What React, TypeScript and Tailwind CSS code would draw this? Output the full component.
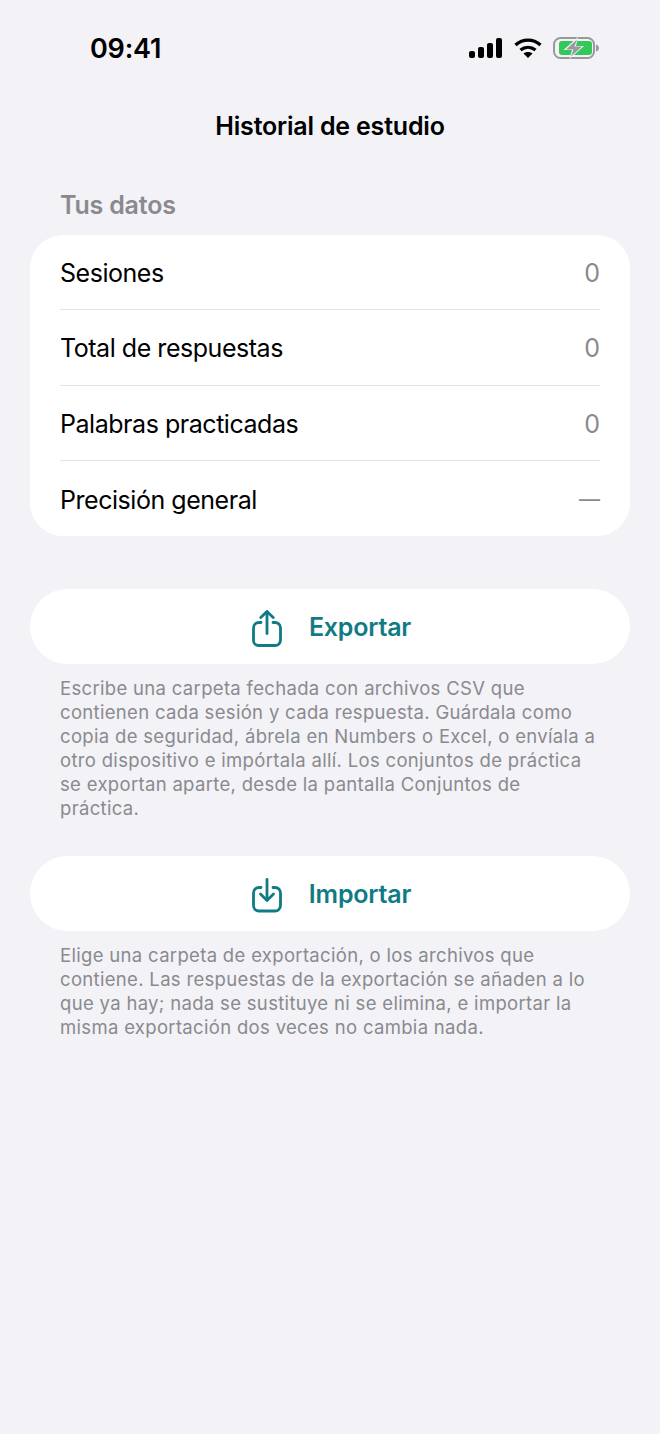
const STATS = [
  { label: "Sesiones", value: "0" },
  { label: "Total de respuestas", value: "0" },
  { label: "Palabras practicadas", value: "0" },
  { label: "Precisión general", value: "—" },
];

function ShareIcon() {
  return (
    <svg className="mt-[3px]" width="30" height="37" viewBox="0 0 30 37" fill="none" stroke="#107b84" strokeWidth="2.800" strokeLinecap="round" strokeLinejoin="round">
      <path d="M9 12.500H7a5.500 5.500 0 0 0-5.500 5.500v12.500a5 5 0 0 0 5 5h16.500a5.500 5.500 0 0 0 5.500-5.500V18a5.500 5.500 0 0 0-5.500-5.500h-2" />
      <path d="M15 23.500V1.800" />
      <path d="M8.800 7.500L15 1.500l6.200 6" />
    </svg>
  );
}

function ImportIcon() {
  return (
    <svg className="mt-[3px]" width="30" height="35" viewBox="0 0 30 35" fill="none" stroke="#107b84" strokeWidth="2.800" strokeLinecap="round" strokeLinejoin="round">
      <path d="M9 9.500H7a5.500 5.500 0 0 0-5.500 5.500v12.500a5.500 5.500 0 0 0 5.500 5.500h16a5.500 5.500 0 0 0 5.500-5.500V15a5.500 5.500 0 0 0-5.500-5.500h-2" />
      <path d="M15 22V1.500" />
      <path d="M8.500 16L15 22.500 21.500 16" />
    </svg>
  );
}

function StatusIcons() {
  return (
    <div className="flex items-center gap-[11.500px]">
      <svg width="33" height="20" viewBox="0 0 33 20" fill="#000">
        <rect x="0" y="13" width="6" height="7" rx="2" />
        <rect x="9" y="9" width="6" height="11" rx="2" />
        <rect x="18" y="5" width="6" height="15" rx="2" />
        <rect x="27" y="0" width="6" height="20" rx="2" />
      </svg>
      <svg width="28" height="20" viewBox="0 0 28 20" fill="none" stroke="#000" strokeWidth="3.400">
        <path d="M1.500 7C9 .5 19 .5 26.500 7" />
        <path d="M6.500 12C11 8.500 17 8.500 21.500 12" />
        <path d="M14 20L9.500 15.500C12 13.500 16 13.500 18.500 15.500Z" fill="#000" stroke="none" />
      </svg>
      <svg width="46" height="22" viewBox="0 0 46 22" fill="none">
        <rect x="1" y="1" width="40" height="20" rx="6.500" stroke="#9a9a9e" strokeWidth="2" />
        <rect x="6" y="4" width="33" height="14" rx="3" fill="#34c759" />
        <path d="M43 7.500c2 .5 3 2 3 3.500s-1 3-3 3.500z" fill="#9a9a9e" />
        <path d="M25 0L10.500 13H19L16.500 22 31 9H23Z" fill="#f2f2f7" />
        <path d="M24 2.500L13 12.500H20.500L18 19.500 29 9.500H21.500Z" fill="#9a9a9e" />
      </svg>
    </div>
  );
}

export default function App() {
  return (
    <div className="min-h-[1434px] bg-[#f2f2f7] font-['Inter','Noto_Sans',sans-serif] text-black">
      <div className="flex h-[98px] items-start justify-between pl-[90px] pr-[61px] pt-[33px]">
        <span className="text-[27px] font-semibold leading-8 tracking-[-0.2px]">09:41</span>
        <div className="pt-[4px]">
          <StatusIcons />
        </div>
      </div>

      <h1 className="text-center text-[25px] font-semibold leading-[56px] tracking-[-0.2px]">Historial de estudio</h1>

      <main className="px-[30px]">
        <h2 className="mt-[35px] px-[30px] text-[25px] font-semibold leading-8 tracking-[-0.2px] text-[#8a8a8e]">Tus datos</h2>

        <section className="mt-[14px] rounded-[33px] bg-white px-[30px]">
          {STATS.map((s, i) => (
            <div
              key={s.label}
              className={`flex h-[75.330px] items-center justify-between pt-[2px] ${i < STATS.length - 1 ? "border-b border-[#e3e3e6]" : ""}`}
            >
              <span className="text-[25px] leading-8 tracking-[-0.46px]">{s.label}</span>
              <span className={`leading-8 text-[#8a8a8e] ${s.value === "—" ? "text-[21px]" : "text-[25px]"}`}>{s.value}</span>
            </div>
          ))}
        </section>

        <button className="mt-[53px] flex h-[75px] w-full items-center justify-center gap-[27px] rounded-full bg-white pl-[3px]">
          <ShareIcon />
          <span className="mt-[2px] text-[25px] font-semibold tracking-[-0.2px] text-[#107b84]">Exportar</span>
        </button>
        <p className="mt-[12px] px-[30px] text-[18.500px] leading-6 tracking-[0.32px] text-[#8a8a8e]">
          Escribe una carpeta fechada con archivos CSV que contienen cada sesión y cada respuesta. Guárdala como copia de seguridad, ábrela en Numbers o Excel, o envíala a otro dispositivo e impórtala allí. Los conjuntos de práctica se exportan aparte, desde la pantalla Conjuntos de práctica.
        </p>

        <button className="mt-[36px] flex h-[75px] w-full items-center justify-center gap-[27px] rounded-full bg-white pl-[3px]">
          <ImportIcon />
          <span className="mt-[2px] text-[25px] font-semibold tracking-[-0.2px] text-[#107b84]">Importar</span>
        </button>
        <p className="mt-[12px] px-[30px] text-[18.500px] leading-6 tracking-[0.32px] text-[#8a8a8e]">
          Elige una carpeta de exportación, o los archivos que contiene. Las respuestas de la exportación se añaden a lo que ya hay; nada se sustituye ni se elimina, e importar la misma exportación dos veces no cambia nada.
        </p>
      </main>
    </div>
  );
}
